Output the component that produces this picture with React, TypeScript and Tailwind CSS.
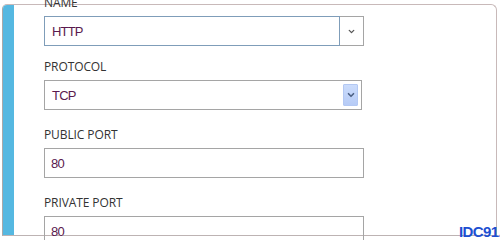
import { ChevronDown } from "lucide-react"

const labelCls =
  "h-[16px] text-[12px] leading-[16px] text-[#333333] font-['Open_Sans',sans-serif] tracking-[-0.1px]"
const valueCls =
  "text-[13px] leading-[16px] text-[#5a1a4e] font-['Liberation_Sans',sans-serif] tracking-[-0.8px]"

function Field({ label, className, children }: { label: string; className?: string; children: React.ReactNode }) {
  return (
    <div className={className}>
      <div className={labelCls}>{label}</div>
      <div className="mt-[5px]">{children}</div>
    </div>
  )
}

export default function App() {
  return (
    <div className="relative w-[500px] h-[240px] overflow-hidden bg-white">
      <div className="ml-[2px] mt-[4px] flex h-[232px] w-[495px] rounded-tl-[5px] rounded-tr-[6px] border border-[#c8b9b9] border-l-[#a9a9a9] border-b-[#bdb3b3]">
        <div className="w-[11px] shrink-0 rounded-tl-[4px] bg-[#55b8e1]" />
        <div className="relative z-10 -mt-[10px] pl-[30px]">
          <Field label="NAME">
            <div className="flex h-[30px] w-[320px]">
              <div className={`flex h-full w-[296px] items-center border border-[#7f9db9] pl-[7px] pt-[1px] ${valueCls}`}>
                HTTP
              </div>
              <div className="flex h-full w-[24px] items-center justify-center border border-l-0 border-[#a5a5a5]">
                <ChevronDown className="size-[9px] text-[#555555]" strokeWidth={3.5} />
              </div>
            </div>
          </Field>
          <Field label="PROTOCOL" className="mt-[13px]">
            <div className="flex h-[30px] w-[318px] items-center justify-between border border-[#a5a5a5] pl-[7px] pr-[3px]">
              <span className={`pt-[1px] ${valueCls}`}>TCP</span>
              <div className="flex h-[22px] w-[15px] items-center justify-center rounded-[1px] border border-[#b3c8f3] bg-gradient-to-b from-[#cbdcfc] to-[#b6cbf6]">
                <ChevronDown className="size-[10px] text-[#4d6185]" strokeWidth={4} />
              </div>
            </div>
          </Field>
          <Field label="PUBLIC PORT" className="mt-[17px]">
            <div className={`flex h-[30px] w-[320px] items-center border border-[#a5a5a5] pl-[6px] pt-[1px] ${valueCls}`}>
              80
            </div>
          </Field>
          <Field label="PRIVATE PORT" className="mt-[17px]">
            <div className={`flex h-[30px] w-[320px] items-center border border-[#a5a5a5] pl-[6px] pt-[1px] ${valueCls}`}>
              80
            </div>
          </Field>
        </div>
      </div>
      <div className="absolute left-[459px] top-[224px] z-20 font-['Liberation_Sans',sans-serif] text-[15px] font-bold leading-[16px] tracking-[-0.6px] text-[#1d4fd1]">
        IDC91.
      </div>
    </div>
  )
}
